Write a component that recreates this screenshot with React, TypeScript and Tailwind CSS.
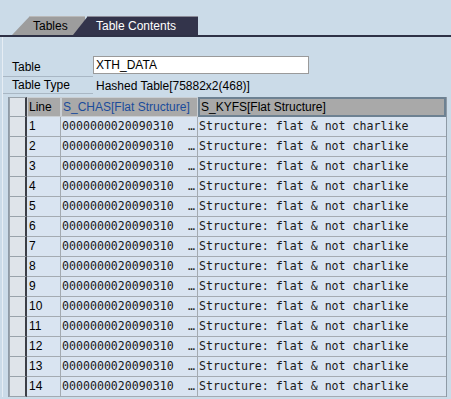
import React from 'react';

const rows = Array.from({ length: 14 }, (_, i) => i + 1);

const sans = { fontFamily: '"Liberation Sans", Arial, sans-serif' };
const mono = { fontFamily: '"DejaVu Sans Mono", "Liberation Mono", monospace' };

export default function App() {
    return (
        <div className="w-[451px] h-[399px] overflow-hidden bg-[#cbdbe8] text-[12px] text-black" style={sans}>
            {/* Tab strip */}
            <div className="flex items-end h-[37px] border-b-2 border-[#2e3146]">
                <div
                    className="ml-[12px] w-[73px] h-[19px] bg-[#9d9d9d] border-t border-[#b9b9b9] flex items-center pl-[21px] leading-none"
                    style={{ clipPath: 'polygon(18px 0, 100% 0, 100% 100%, 0 100%)' }}
                >
                    Tables
                </div>
                <div
                    className="-ml-[12px] w-[125px] h-[19px] bg-[#33344b] border-t border-[#8c8c98] flex items-center pl-[23px] text-white leading-none"
                    style={{ clipPath: 'polygon(15px 0, 100% 0, 100% 100%, 0 100%)' }}
                >
                    Table Contents
                </div>
            </div>

            {/* Panel */}
            <div className="border-l border-[#e6edf4] ml-[2px] pt-[18px]">
                <div className="flex h-[22px]">
                    <div className="w-[90px] pl-[9px] border-b border-[#a9b7c4] flex items-center pt-[2px]">Table</div>
                    <div className="pt-[1px]">
                        <div className="w-[216px] h-[18px] bg-white border border-[#9a9a9a] flex items-center pl-[2px] leading-none">
                            XTH_DATA
                        </div>
                    </div>
                </div>
                <div className="flex h-[17px]">
                    <div className="w-[90px] pl-[9px] border-b border-[#a9b7c4] flex items-center">Table Type</div>
                    <div className="pl-[3px] flex items-center">Hashed Table[75882x2(468)]</div>
                </div>

                {/* Grid */}
                <div className="mt-[3px] ml-[5px] w-[439px] border-l border-r border-[#8e9aa6]">
                    <div className="flex h-[20px]">
                        <div className="w-[18px] bg-[#dfe4ea] border border-[#9aa3ab] border-r-2 border-r-[#3c3f47]" />
                        <div className="w-[34px] bg-[#a9a9a9] border border-[#c9ced3] flex items-center pl-[1px]">Line</div>
                        <div className="w-[137px] bg-[#a9a9a9] border border-[#c9ced3] flex items-center pl-[1px] text-[#1a4c9c]">
                            S_CHAS[Flat Structure]
                        </div>
                        <div className="flex-1 bg-[#a9a9a9] border-2 border-[#6d8192] flex items-center pl-[1px]">
                            S_KYFS[Flat Structure]
                        </div>
                    </div>
                    {rows.map((n) => (
                        <div key={n} className="flex h-[20px]">
                            <div className="w-[18px] bg-[#dfe4ea] border-b border-l border-[#9aa3ab] border-r-2 border-r-[#3c3f47]" />
                            <div className="w-[34px] bg-[#d9e4f1] border-b border-r border-[#a4abb2] flex items-end pb-[1px] pl-[2px]">{n}</div>
                            <div
                                className="w-[137px] bg-[#d9e4f1] border-b border-r border-[#a4abb2] flex items-center justify-between pl-[1px] pr-[2px] text-[11.6px] text-[#1a1a1a]"
                                style={mono}
                            >
                                <span>0000000020090310</span>
                                <span>…</span>
                            </div>
                            <div
                                className="flex-1 bg-[#d9e4f1] border-b border-[#a4abb2] flex items-center pl-[1px] text-[11.6px] text-[#1a1a1a] whitespace-pre"
                                style={mono}
                            >
                                Structure: flat &amp; not charlike
                            </div>
                        </div>
                    ))}
                </div>
            </div>
        </div>
    );
}
